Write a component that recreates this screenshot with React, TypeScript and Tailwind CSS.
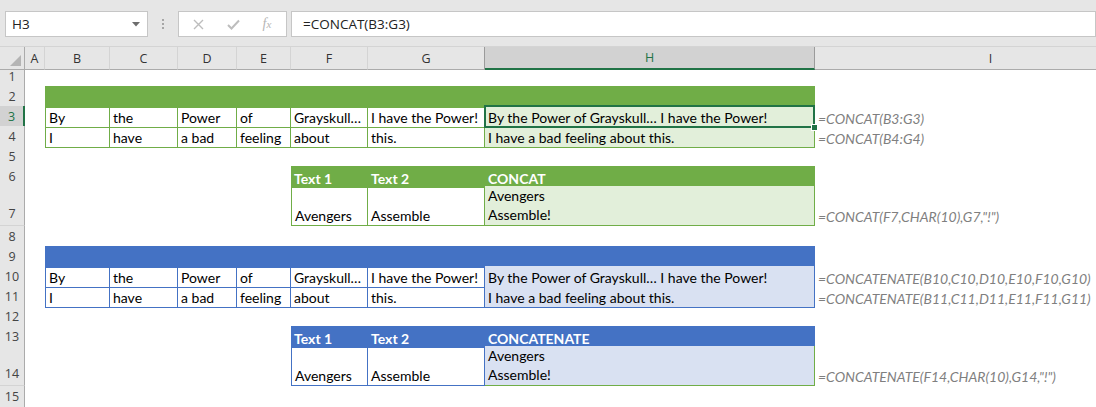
import React from "react";

const GRID =
  "grid grid-cols-[25px_20px_65px_68px_59px_54px_77px_117px_330px_352px]";

const CELLFONT = "font-['Lato','Liberation_Sans',sans-serif] text-[14px] text-black";

function RowHead({ n, sel }: { n: number; sel?: boolean }) {
  return (
    <div
      className={
        sel
          ? "flex items-center justify-center pt-[2px] bg-[#D2D2D2] border-r-2 border-r-[#217346] border-b border-b-[#D4D4D4] text-[12.5px] text-[#217346] font-['Open_Sans','Noto_Sans',sans-serif]"
          : "flex items-center justify-center pt-[2px] bg-[#E6E6E6] border-r border-r-[#ABABAB] border-b border-b-[#D4D4D4] text-[12.5px] text-[#444] font-['Open_Sans','Noto_Sans',sans-serif]"
      }
    >
      {n}
    </div>
  );
}

function Cell({
  className,
  children,
}: {
  className?: string;
  children?: React.ReactNode;
}) {
  return (
    <div
      className={
        "flex items-end pl-[3px] pb-[1px] whitespace-nowrap leading-[17px] " +
        (className ?? "")
      }
    >
      {children}
    </div>
  );
}

function Formula({ children }: { children: React.ReactNode }) {
  return (
    <Cell className="italic text-[#7F7F7F] pl-[2px]">{children}</Cell>
  );
}

type Theme = "green" | "blue";

function WordRow({
  n,
  theme,
  words,
  result,
  formula,
  selected,
}: {
  n: number;
  theme: Theme;
  words: string[];
  result: string;
  formula: string;
  selected?: boolean;
}) {
  const g = theme === "green";
  const first = g
    ? "border-l border-r border-b border-[#70AD47] pl-[2px]"
    : "border-l border-r border-b border-[#4472C4] pl-[2px]";
  const mid = g
    ? "border-r border-b border-[#70AD47]"
    : "border-r border-b border-[#4472C4]";
  const res = g
    ? "relative bg-[#E2EFDA] border-r border-b border-[#70AD47]"
    : "relative bg-[#D9E1F2] border-r border-b border-[#4472C4]";
  return (
    <div className={GRID + " h-[20px] " + CELLFONT}>
      <RowHead n={n} sel={selected} />
      <div />
      {words.map((w, i) => (
        <Cell key={i} className={i === 0 ? first : mid}>
          {w}
        </Cell>
      ))}
      <Cell className={res}>
        {result}
        {selected && (
          <div className="absolute left-[-1px] top-[-1px] right-[-1px] bottom-[-1px] border-2 border-[#217346] z-10">
            <div className="absolute right-[-5px] bottom-[-5px] w-[7px] h-[7px] bg-[#217346] border border-white" />
          </div>
        )}
      </Cell>
      <Formula>{formula}</Formula>
    </div>
  );
}

function Band({ n, theme }: { n: number; theme: Theme }) {
  return (
    <div className={GRID + " h-[20px]"}>
      <RowHead n={n} />
      <div />
      <div
        className={
          theme === "green" ? "col-span-7 bg-[#70AD47]" : "col-span-7 bg-[#4472C4]"
        }
      />
      <div />
    </div>
  );
}

function Empty({ n }: { n: number }) {
  return (
    <div className={GRID + " h-[20px]"}>
      <RowHead n={n} />
    </div>
  );
}

function HeadRow({ n, theme, title }: { n: number; theme: Theme; title: string }) {
  const bg = theme === "green" ? "bg-[#70AD47]" : "bg-[#4472C4]";
  return (
    <div className={GRID + " h-[20px] " + CELLFONT}>
      <RowHead n={n} />
      <div />
      <div />
      <div />
      <div />
      <div />
      <Cell className={bg + " font-bold text-white"}>Text 1</Cell>
      <Cell className={bg + " font-bold text-white"}>Text 2</Cell>
      <Cell className={bg + " font-bold text-white"}>{title}</Cell>
      <div />
    </div>
  );
}

function TallRow({
  n,
  theme,
  formula,
}: {
  n: number;
  theme: Theme;
  formula: string;
}) {
  const g = theme === "green";
  const first = g
    ? "border-l border-r border-b border-[#70AD47] pl-[2px]"
    : "border-l border-r border-b border-[#4472C4] pl-[2px]";
  const mid = g
    ? "border-r border-b border-[#70AD47]"
    : "border-r border-b border-[#4472C4]";
  const res = g
    ? "bg-[#E2EFDA] border-r border-b border-[#70AD47]"
    : "bg-[#D9E1F2] border-r border-b border-[#70AD47]";
  return (
    <div className={GRID + " h-[40px] " + CELLFONT}>
      <div className="flex items-end justify-center pb-[1px] bg-[#E6E6E6] border-r border-r-[#ABABAB] border-b border-b-[#D4D4D4] text-[12.5px] text-[#444] font-['Open_Sans','Noto_Sans',sans-serif]">
        {n}
      </div>
      <div />
      <div />
      <div />
      <div />
      <div />
      <Cell className={first}>Avengers</Cell>
      <Cell className={mid}>Assemble</Cell>
      <Cell className={res + " leading-[19px] pb-0"}>
        <div>
          <div>Avengers</div>
          <div>Assemble!</div>
        </div>
      </Cell>
      <Formula>{formula}</Formula>
    </div>
  );
}

function FormulaBar() {
  return (
    <div className="h-[47px] bg-[#E6E6E6] flex items-start pt-[11px] font-['Open_Sans','Noto_Sans',sans-serif] border-b border-b-[#D4D4D4]">
      <div className="ml-[5px] w-[143px] h-[26px] bg-white border border-[#C6C6C6] flex items-center justify-between pl-[6px] pr-[7px]">
        <span className="text-[13.5px] text-[#222]">H3</span>
        <svg width="8" height="5" viewBox="0 0 8 5">
          <path d="M0 0 H8 L4 4.5 Z" fill="#6D6D6D" />
        </svg>
      </div>
      <div className="w-[30px] h-[26px] flex flex-col items-center justify-center gap-[2px]">
        <div className="w-[2px] h-[2px] bg-[#A6A6A6]" />
        <div className="w-[2px] h-[2px] bg-[#A6A6A6]" />
        <div className="w-[2px] h-[2px] bg-[#A6A6A6]" />
      </div>
      <div className="w-[109px] h-[26px] bg-white border border-[#C6C6C6] flex items-center">
        <div className="w-[38px] flex justify-center">
          <svg width="11" height="11" viewBox="0 0 11 11">
            <path d="M1 1 L10 10 M10 1 L1 10" stroke="#BDBDBD" strokeWidth="1.4" />
          </svg>
        </div>
        <div className="w-[32px] flex justify-center">
          <svg width="13" height="11" viewBox="0 0 13 11">
            <path d="M1 6 L4.5 9.5 L12 1.5" stroke="#BDBDBD" strokeWidth="2" fill="none" />
          </svg>
        </div>
        <div className="w-[36px] flex justify-center">
          <span className="font-['Liberation_Serif',serif] italic text-[14px] text-[#B5B5B5] leading-none">
            f<span className="text-[11px]">x</span>
          </span>
        </div>
      </div>
      <div className="ml-[4px] flex-1 h-[26px] bg-white border border-[#C6C6C6] flex items-center pl-[11px]">
        <span className="text-[13.5px] text-[#222]">=CONCAT(B3:G3)</span>
      </div>
    </div>
  );
}

function ColHeaders() {
  const cols = ["A", "B", "C", "D", "E", "F", "G", "H", "I"];
  return (
    <div className={GRID + " h-[19px] font-['Open_Sans','Noto_Sans',sans-serif] text-[12.5px]"}>
      <div className="relative bg-[#E6E6E6] border-r border-r-[#ABABAB] border-b border-b-[#ABABAB]">
        <svg className="absolute right-[3px] bottom-[3px]" width="11" height="11" viewBox="0 0 11 11">
          <path d="M11 0 V11 H0 Z" fill="#B4B4B4" />
        </svg>
      </div>
      {cols.map((c) =>
        c === "H" ? (
          <div
            key={c}
            className="flex items-center justify-center pt-[2px] bg-[#D2D2D2] border-r border-r-[#9B9B9B] border-b-2 border-b-[#217346] text-[#217346]"
          >
            {c}
          </div>
        ) : c === "G" ? (
          <div
            key={c}
            className="flex items-center justify-center pt-[2px] bg-[#E6E6E6] border-r border-r-[#9B9B9B] border-b border-b-[#ABABAB] text-[#333]"
          >
            {c}
          </div>
        ) : (
          <div
            key={c}
            className="flex items-center justify-center pt-[2px] bg-[#E6E6E6] border-r border-r-[#D4D4D4] border-b border-b-[#ABABAB] text-[#333]"
          >
            {c}
          </div>
        )
      )}
    </div>
  );
}

export default function App() {
  const w3 = ["By", "the", "Power", "of", "Grayskull…", "I have the Power!"];
  const w4 = ["I", "have", "a bad", "feeling", "about", "this."];
  return (
    <div className="w-[1096px] h-[407px] overflow-hidden bg-white">
      <FormulaBar />
      <ColHeaders />
      <Empty n={1} />
      <Band n={2} theme="green" />
      <WordRow
        n={3}
        theme="green"
        words={w3}
        result="By the Power of Grayskull… I have the Power!"
        formula="=CONCAT(B3:G3)"
        selected
      />
      <WordRow
        n={4}
        theme="green"
        words={w4}
        result="I have a bad feeling about this."
        formula="=CONCAT(B4:G4)"
      />
      <Empty n={5} />
      <HeadRow n={6} theme="green" title="CONCAT" />
      <TallRow n={7} theme="green" formula={'=CONCAT(F7,CHAR(10),G7,"!")'} />
      <Empty n={8} />
      <Band n={9} theme="blue" />
      <WordRow
        n={10}
        theme="blue"
        words={w3}
        result="By the Power of Grayskull… I have the Power!"
        formula="=CONCATENATE(B10,C10,D10,E10,F10,G10)"
      />
      <WordRow
        n={11}
        theme="blue"
        words={w4}
        result="I have a bad feeling about this."
        formula="=CONCATENATE(B11,C11,D11,E11,F11,G11)"
      />
      <Empty n={12} />
      <HeadRow n={13} theme="blue" title="CONCATENATE" />
      <TallRow n={14} theme="blue" formula={'=CONCATENATE(F14,CHAR(10),G14,"!")'} />
      <Empty n={15} />
    </div>
  );
}
